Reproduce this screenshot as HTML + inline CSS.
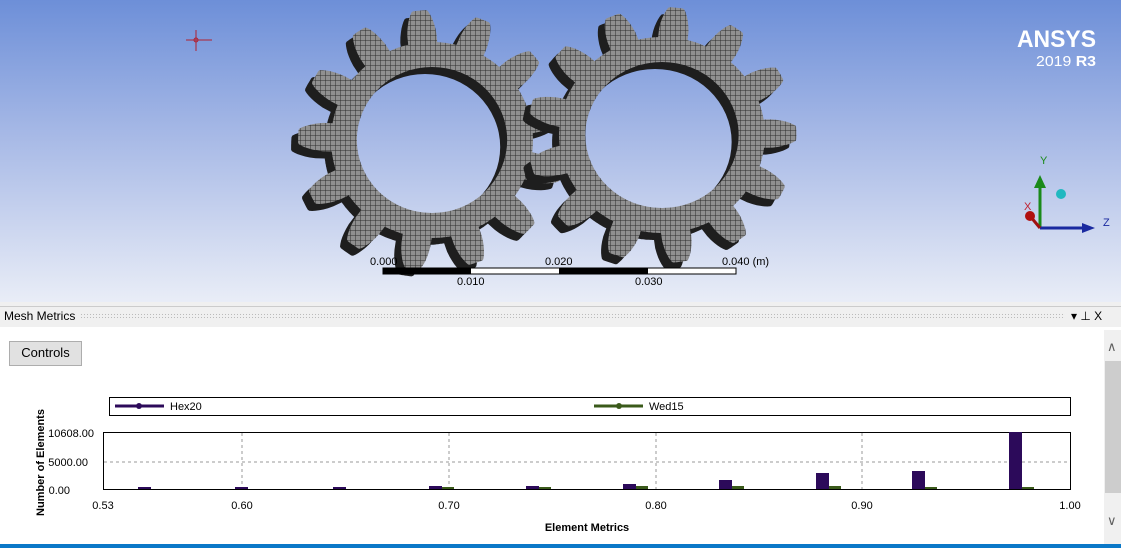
<!DOCTYPE html>
<html><head><meta charset="utf-8"><style>
body{margin:0;width:1121px;height:548px;overflow:hidden;font-family:"Liberation Sans",sans-serif;background:#fff;position:relative}
.vp{position:absolute;left:0;top:0;width:1121px;height:302px;background:linear-gradient(#6d8fd8 0%,#a7b9e6 45%,#e9edf7 100%)}
.abs{position:absolute}
</style></head><body>
<div class="vp"></div>
<svg class="abs" style="left:0;top:0" width="1121" height="302">
<defs>
<pattern id="m" width="5" height="5" patternUnits="userSpaceOnUse"><rect width="5" height="5" fill="#909090"/><path d="M0 0H5M0 0V5" stroke="#2e2e2e" stroke-width="1"/></pattern>
</defs>
<g id="gears"></g>
<path d="M186 40H212M196 30V51" stroke="#b02030" stroke-width="1"/>
<circle cx="196" cy="40" r="2" fill="none" stroke="#b02030"/>
<rect x="383" y="268" width="353" height="6" fill="#fff" stroke="#000"/>
<rect x="383" y="268" width="88" height="6" fill="#000"/>
<rect x="559" y="268" width="89" height="6" fill="#000"/>
<g font-size="11" fill="#000"><text x="370" y="265">0.000</text><text x="545" y="265">0.020</text><text x="722" y="265">0.040 (m)</text><text x="457" y="285">0.010</text><text x="635" y="285">0.030</text></g>
<text x="1017" y="47" font-size="24" font-weight="bold" fill="#fff" textLength="79" lengthAdjust="spacingAndGlyphs">ANSYS</text>
<text x="1036" y="66" font-size="15" fill="#fff" textLength="60" lengthAdjust="spacingAndGlyphs">2019 <tspan font-weight="bold">R3</tspan></text>
<line x1="1040" y1="228" x2="1040" y2="185" stroke="#1a8a1a" stroke-width="3"/><path d="M1034 188L1040 175L1046 188Z" fill="#1a8a1a"/>
<text x="1040" y="164" font-size="11" fill="#1a8a1a">Y</text>
<line x1="1040" y1="228" x2="1085" y2="228" stroke="#1a2aa0" stroke-width="3"/><path d="M1082 223L1095 228L1082 233Z" fill="#1a2aa0"/>
<text x="1103" y="226" font-size="11" fill="#1a2aa0">Z</text>
<line x1="1040" y1="228" x2="1030" y2="216" stroke="#a01010" stroke-width="3"/><circle cx="1030" cy="216" r="5" fill="#b01010"/>
<text x="1024" y="210" font-size="11" fill="#c02030">X</text>
<circle cx="1061" cy="194" r="5" fill="#20b8c0"/>
</svg>
<div class="abs" style="left:0;top:302px;width:1121px;height:4px;background:#f0f0f0"></div>
<div class="abs" style="left:0;top:306px;width:1121px;height:20px;background:#f0f0f0;border-top:1px solid #ccc"></div>
<div class="abs" style="left:4px;top:309px;font-size:12px;color:#000">Mesh Metrics</div>
<div class="abs" style="left:80px;top:313px;width:985px;height:5px;background-image:radial-gradient(#bbb 0.6px,transparent 0.8px);background-size:3px 3px"></div>
<div class="abs" style="left:1071px;top:309px;width:50px;height:14px;background:#f0f0f0;font-size:12px">▾ ⊥ X</div>
<div class="abs" style="left:9px;top:341px;width:71px;height:23px;background:#e1e1e1;border:1px solid #adadad;font-size:13px;text-align:center;line-height:22px">Controls</div>
<div class="abs" style="left:1104px;top:330px;width:17px;height:214px;background:#f0f0f0"></div>
<div class="abs" style="left:1105px;top:361px;width:16px;height:132px;background:#cdcdcd"></div>
<div class="abs" style="left:1107px;top:339px;font-size:13px;color:#606060">∧</div>
<div class="abs" style="left:1107px;top:513px;font-size:13px;color:#606060">∨</div>
<svg class="abs" style="left:0;top:326px" width="1104" height="218">
<rect x="109.5" y="71.5" width="961" height="18" fill="#fff" stroke="#000"/>
<line x1="115" y1="80" x2="164" y2="80" stroke="#2c0a5a" stroke-width="3"/><circle cx="139" cy="80" r="3" fill="#2c0a5a"/>
<text x="170" y="84" font-size="11">Hex20</text>
<line x1="594" y1="80" x2="643" y2="80" stroke="#3a5a1a" stroke-width="3"/><circle cx="619" cy="80" r="3" fill="#3a5a1a"/>
<text x="649" y="84" font-size="11">Wed15</text>
<rect x="103.5" y="106.5" width="967" height="57" fill="#fff" stroke="#000"/>
<g stroke="#999" stroke-dasharray="3,3"><line x1="242" y1="107" x2="242" y2="163"/><line x1="449" y1="107" x2="449" y2="163"/><line x1="656" y1="107" x2="656" y2="163"/><line x1="862" y1="107" x2="862" y2="163"/><line x1="104" y1="136" x2="1070" y2="136"/></g>
<g fill="#2c0a5a"><rect x="138" y="161" width="13" height="2"/><rect x="235" y="161" width="13" height="2"/><rect x="333" y="161" width="13" height="2"/><rect x="429" y="160" width="13" height="3"/><rect x="526" y="160" width="13" height="3"/><rect x="623" y="158" width="13" height="5"/><rect x="719" y="154" width="13" height="9"/><rect x="816" y="147" width="13" height="16"/><rect x="912" y="145" width="13" height="18"/><rect x="1009" y="106" width="13" height="57"/></g>
<g fill="#3a5a1a"><rect x="442" y="161" width="12" height="2"/><rect x="539" y="161" width="12" height="2"/><rect x="636" y="160" width="12" height="3"/><rect x="732" y="160" width="12" height="3"/><rect x="829" y="160" width="12" height="3"/><rect x="925" y="161" width="12" height="2"/><rect x="1022" y="161" width="12" height="2"/></g>
<g font-size="11" text-anchor="end"><text x="94" y="111">10608.00</text><text x="88" y="140">5000.00</text><text x="70" y="168">0.00</text></g>
<g font-size="11" text-anchor="middle"><text x="103" y="183">0.53</text><text x="242" y="183">0.60</text><text x="449" y="183">0.70</text><text x="656" y="183">0.80</text><text x="862" y="183">0.90</text><text x="1070" y="183">1.00</text></g>
<text x="587" y="205" font-size="11" font-weight="bold" text-anchor="middle">Element Metrics</text>
<text transform="translate(44,190) rotate(-90)" font-size="11" font-weight="bold">Number of Elements</text>
</svg>
<div class="abs" style="left:0;top:544px;width:1121px;height:4px;background:#0a78c8"></div>
<script>
function gear(cx,cy,rin,rroot,rtip,n,phase,sx){
 var d="",N=n*40;
 for(var i=0;i<=N;i++){var a=phase+i/N*2*Math.PI;var t=((i%40)/40);
  var r=rroot; if(t>0.05&&t<0.65){var u=(t-0.05)/0.6;r=rroot+(rtip-rroot)*Math.min(1,Math.pow(Math.sin(u*Math.PI),0.7)*1.15);}
  d+=(i?"L":"M")+(cx+r*Math.cos(a)*sx).toFixed(1)+" "+(cy+r*Math.sin(a)).toFixed(1);}
 d+="Z M"+(cx+rin*sx)+" "+cy+" A"+(rin*sx)+" "+rin+" 0 1 0 "+(cx-rin*sx)+" "+cy+" A"+(rin*sx)+" "+rin+" 0 1 0 "+(cx+rin*sx)+" "+cy+"Z";
 return d;}
var g=document.getElementById("gears"),s="";
[[432,140,73,98,130,13,0.1,1.03],[662,135,73,98,128,13,0.3,1.05]].forEach(function(p){
 s+='<path d="'+gear(p[0]-7,p[1]+7,p[2],p[3],p[4],p[5],p[6],p[7])+'" fill="#1e1e1e" fill-rule="evenodd"/>';
 s+='<path d="'+gear(p[0],p[1],p[2],p[3],p[4],p[5],p[6],p[7])+'" fill="url(#m)" fill-rule="evenodd"/>';});
g.innerHTML=s;
</script>
</body></html>
